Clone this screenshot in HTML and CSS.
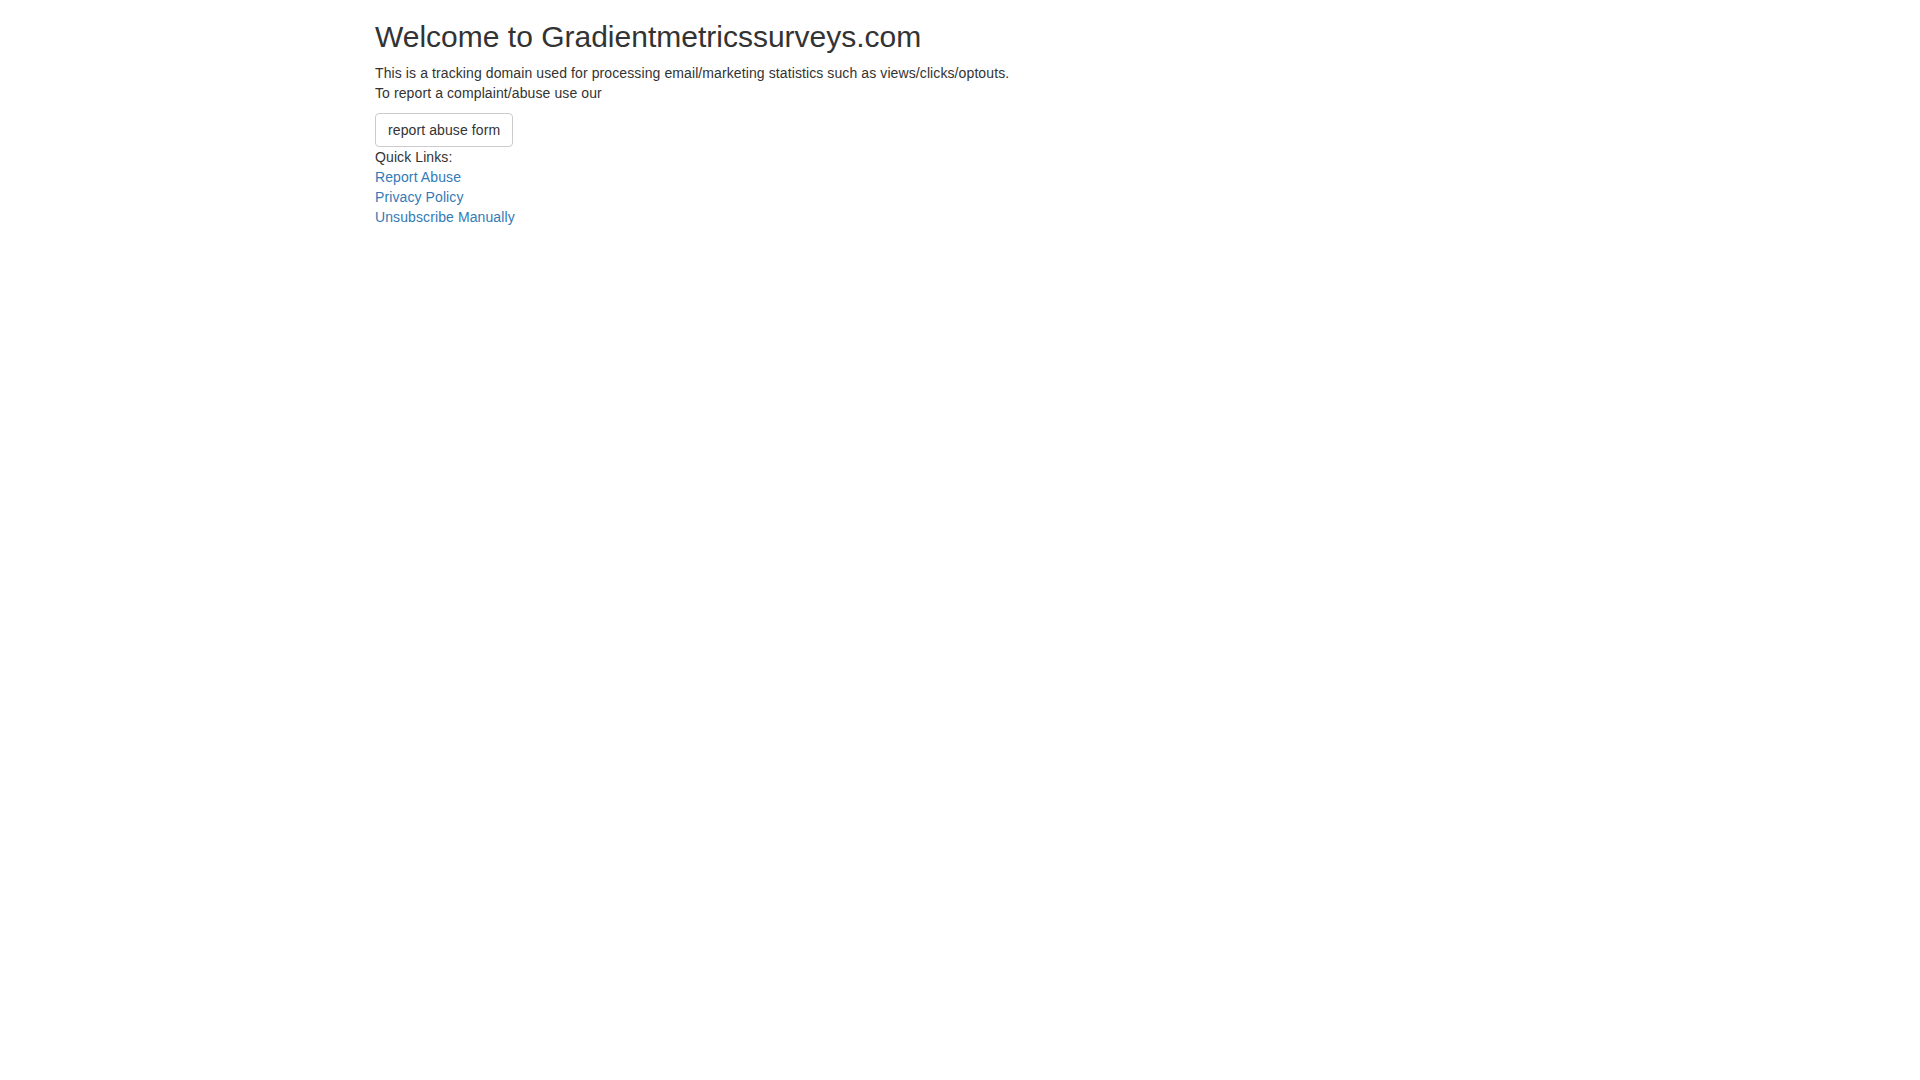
FILE: index.html
```html
<!DOCTYPE html>
<html lang="en">
<head>
<meta charset="utf-8">
<title>Welcome to Gradientmetricssurveys.com</title>
<link rel="stylesheet" href="styles.css">
</head>
<body>
<div class="container">
  <h2 class="title">Welcome to Gradientmetricssurveys.com</h2>
  <p class="intro">This is a tracking domain used for processing email/marketing statistics such as views/clicks/optouts.<br>To report a complaint/abuse use our</p>
  <a class="btn" href="#">report abuse form</a>
  <div class="links">
    <div class="label">Quick Links:</div>
    <a href="#">Report Abuse</a>
    <a href="#">Privacy Policy</a>
    <a href="#">Unsubscribe Manually</a>
  </div>
</div>
</body>
</html>
```
FILE: styles.css
```css
html, body {
  margin: 0;
  padding: 0;
  background: #fff;
}
body {
  font-family: "Liberation Sans", Arial, Helvetica, sans-serif;
  font-size: 14px;
  line-height: 20px;
  letter-spacing: 0.1px;
  color: #333;
}
.container {
  width: 1170px;
  margin: 0 auto;
}
.title {
  font-size: 30px;
  font-weight: 500;
  line-height: 33px;
  letter-spacing: 0;
  margin: 20px 0 10px;
  color: #333;
}
.intro {
  margin: 0 0 10px;
}
.btn {
  display: inline-block;
  box-sizing: border-box;
  height: 34px;
  padding: 6px 12px;
  border: 1px solid #ccc;
  border-radius: 4px;
  background: #fff;
  color: #333;
  text-decoration: none;
  line-height: 20px;
  vertical-align: top;
}
.links {
  display: flex;
  flex-direction: column;
  align-items: flex-start;
}
.links a {
  color: #337ab7;
  text-decoration: none;
}
```
